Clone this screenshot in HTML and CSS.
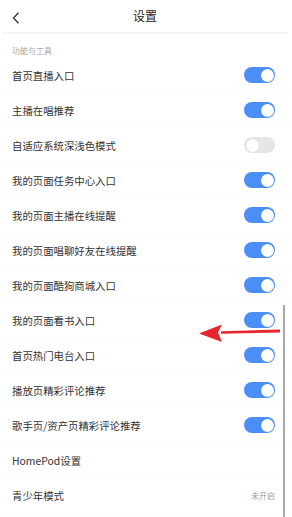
FILE: index.html
```html
<!DOCTYPE html>
<html lang="zh">
<head>
<meta charset="utf-8">
<link rel="stylesheet" href="styles.css">
</head>
<body>
<div class="page">
  <header class="header">
    <svg class="back" width="8" height="12" viewBox="0 0 8 12"><path d="M6.5 0.8 L1.5 6 L6.5 11.2" fill="none" stroke="#333" stroke-width="1.3"/></svg>
    <div class="title">设置</div>
  </header>
  <div class="section">功能与工具</div>
  <div class="list">
    <div class="row"><span>首页直播入口</span><span class="sw on"></span></div>
    <div class="row"><span>主播在唱推荐</span><span class="sw on"></span></div>
    <div class="row"><span>自适应系统深浅色模式</span><span class="sw"></span></div>
    <div class="row"><span>我的页面任务中心入口</span><span class="sw on"></span></div>
    <div class="row"><span>我的页面主播在线提醒</span><span class="sw on"></span></div>
    <div class="row"><span>我的页面唱聊好友在线提醒</span><span class="sw on"></span></div>
    <div class="row"><span>我的页面酷狗商城入口</span><span class="sw on"></span></div>
    <div class="row"><span>我的页面看书入口</span><span class="sw on"></span></div>
    <div class="row"><span>首页热门电台入口</span><span class="sw on"></span></div>
    <div class="row"><span>播放页精彩评论推荐</span><span class="sw on"></span></div>
    <div class="row"><span>歌手页/资产页精彩评论推荐</span><span class="sw on"></span></div>
    <div class="row"><span>HomePod设置</span></div>
    <div class="row"><span>青少年模式</span><span class="val">未开启</span></div>
  </div>
  <div class="scrollbar"></div>
  <svg class="arrow" width="90" height="24" viewBox="0 0 90 24">
    <path d="M22 10.2 L81 8.6 L81 11.4 L22 12.8 Z" fill="#e5262b"/>
    <path d="M0 12.5 L23 3.5 L19 11.5 L23 21 Z" fill="#e5262b"/>
  </svg>
</div>
</body>
</html>
```

FILE: styles.css
```css
* { box-sizing: border-box; }
html, body { margin: 0; padding: 0; background: #fff; }
body {
  font-family: "Noto Sans CJK SC", "Noto Sans", sans-serif;
  color: #333;
  width: 292px;
  height: 517px;
  overflow: hidden;
}
.page { position: relative; width: 292px; height: 517px; }
.header {
  height: 34px;
  display: flex;
  align-items: center;
  justify-content: center;
  position: relative;
  border-bottom: 2px solid #f6f6f6;
  margin: 0 4px 0 2px;
}
.back { position: absolute; left: 10px; top: 11.5px; }
.title { font-size: 12px; color: #222; line-height: 14px; }
.section {
  height: 24px;
  padding: 12px 0 0 12px;
  font-size: 8px;
  line-height: 10px;
  color: #a5a5a5;
}
.row {
  height: 35px;
  display: flex;
  align-items: center;
  justify-content: space-between;
  padding: 0 17px 0 12px;
  font-size: 10.4px;
  color: #333;
  border-bottom: 1px solid #fcfcfc;
}
.sw {
  width: 31px;
  height: 16px;
  border-radius: 8px;
  background: #e6e6e6;
  position: relative;
}
.sw::after {
  content: "";
  position: absolute;
  left: 1.5px;
  top: 1.5px;
  width: 13px;
  height: 13px;
  border-radius: 50%;
  background: #fff;
  box-shadow: 0 0 1px rgba(0,0,0,0.15);
}
.sw.on { background: #4b8ef5; }
.sw.on::after { left: 16.5px; }
.val { font-size: 8px; color: #9a9a9a; }
.scrollbar {
  position: absolute;
  left: 283px;
  top: 305px;
  width: 2px;
  height: 212px;
  background: #a8a8a8;
}
.arrow { position: absolute; left: 199px; top: 321px; }
```
